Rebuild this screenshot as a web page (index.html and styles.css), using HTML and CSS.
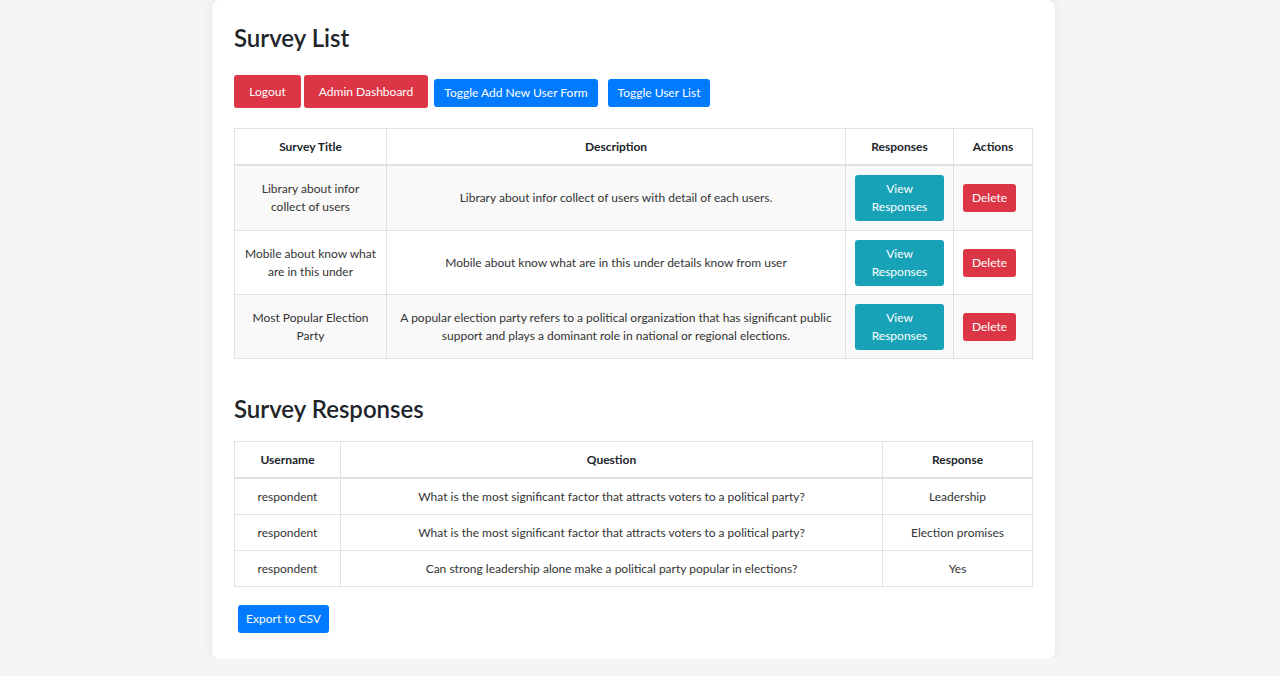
FILE: index.html
```html
<!DOCTYPE html>
<html lang="en">
<head>
<meta charset="utf-8">
<title>Survey List</title>
<link rel="stylesheet" href="styles.css">
</head>
<body>
<div class="page">
  <div class="card">
    <h2 class="title">Survey List</h2>
    <div class="toolbar">
      <button class="btn btn-danger btn-lg btn-logout">Logout</button>
      <button class="btn btn-danger btn-lg btn-admin">Admin Dashboard</button>
      <button class="btn btn-primary btn-toggle1">Toggle Add New User Form</button>
      <button class="btn btn-primary btn-toggle2">Toggle User List</button>
    </div>
    <table class="table striped survey-table">
      <thead>
        <tr>
          <th class="c-title">Survey Title</th>
          <th class="c-desc">Description</th>
          <th class="c-resp">Responses</th>
          <th class="c-act">Actions</th>
        </tr>
      </thead>
      <tbody>
        <tr>
          <td>Library about infor collect of users</td>
          <td>Library about infor collect of users with detail of each users.</td>
          <td class="btn-cell"><button class="btn btn-info btn-view">View Responses</button></td>
          <td class="btn-cell"><button class="btn btn-danger btn-del">Delete</button></td>
        </tr>
        <tr>
          <td>Mobile about know what are in this under</td>
          <td>Mobile about know what are in this under details know from user</td>
          <td class="btn-cell"><button class="btn btn-info btn-view">View Responses</button></td>
          <td class="btn-cell"><button class="btn btn-danger btn-del">Delete</button></td>
        </tr>
        <tr>
          <td>Most Popular Election Party</td>
          <td>A popular election party refers to a political organization that has significant public support and plays a dominant role in national or regional elections.</td>
          <td class="btn-cell"><button class="btn btn-info btn-view">View Responses</button></td>
          <td class="btn-cell"><button class="btn btn-danger btn-del">Delete</button></td>
        </tr>
      </tbody>
    </table>

    <h2 class="title title-2">Survey Responses</h2>
    <table class="table responses-table">
      <thead>
        <tr>
          <th class="c-user">Username</th>
          <th class="c-q">Question</th>
          <th class="c-r">Response</th>
        </tr>
      </thead>
      <tbody>
        <tr>
          <td>respondent</td>
          <td>What is the most significant factor that attracts voters to a political party?</td>
          <td>Leadership</td>
        </tr>
        <tr>
          <td>respondent</td>
          <td>What is the most significant factor that attracts voters to a political party?</td>
          <td>Election promises</td>
        </tr>
        <tr>
          <td>respondent</td>
          <td>Can strong leadership alone make a political party popular in elections?</td>
          <td>Yes</td>
        </tr>
      </tbody>
    </table>
    <div class="export-row">
      <button class="btn btn-primary btn-export">Export to CSV</button>
    </div>
  </div>
</div>
</body>
</html>
```

FILE: styles.css
```css
* { box-sizing: border-box; }

html, body {
  margin: 0;
  padding: 0;
  background: #f4f5f5;
  font-family: Lato, "Noto Sans", sans-serif;
  font-size: 12px;
  line-height: 18px;
  color: #212529;
}

.page {
  display: flex;
  justify-content: flex-start;
  padding-left: 212px;
}

.card {
  width: 843px;
  background: #fff;
  border-radius: 8px;
  box-shadow: 0 0 10px rgba(0, 0, 0, 0.08);
  padding: 20px 23px 26px 22px;
}

.title {
  margin: 0;
  font-size: 24px;
  line-height: 36px;
  font-weight: 600;
  color: #212529;
}

.title-2 {
  margin-top: 32px;
}

.toolbar {
  display: flex;
  align-items: flex-start;
  margin-top: 19px;
  margin-bottom: 20px;
}

.btn {
  font-family: inherit;
  font-size: 12px;
  line-height: 18px;
  border: 0;
  border-radius: 3px;
  color: #fff;
  padding: 5px 10px;
  white-space: nowrap;
  cursor: pointer;
}

.btn-lg {
  height: 33px;
  padding: 0;
}

.btn-danger { background: #dc3545; }
.btn-primary { background: #007bff; }
.btn-info { background: #17a2b8; }

.btn-logout { width: 67px; margin-right: 3px; }
.btn-admin { width: 124px; margin-right: 6px; }
.btn-toggle1 { width: 164px; margin-right: 10px; margin-top: 4px; padding: 5px 0; }
.btn-toggle2 { width: 102px; margin-top: 4px; padding: 5px 0; }

.table {
  width: 798px;
  border-collapse: collapse;
  table-layout: fixed;
}

.table th,
.table td {
  border: 1px solid #dee2e6;
  padding: 8.5px 9.6px;
  text-align: center;
  vertical-align: middle;
  color: #333;
}

.table th {
  font-weight: 700;
  color: #212529;
  border-bottom-width: 2px;
}

.table.striped tbody tr:nth-child(odd) td {
  background: #f9f9f9;
}

.survey-table td.btn-cell {
  padding: 9px 9px 9px 9px;
  text-align: left;
}

.survey-table tbody tr + tr td.btn-cell {
  padding-top: 8.5px;
  padding-bottom: 8.5px;
}

.c-title { width: 152px; }
.c-desc { width: 459px; }
.c-resp { width: 108px; }
.c-act { width: 79px; }

.c-user { width: 106px; }
.c-q { width: 542px; }
.c-r { width: 150px; }

.btn-view {
  width: 89px;
  padding: 5px 6px;
  display: block;
  white-space: normal;
}

.btn-del {
  width: 53px;
  padding: 5px 0;
}

.responses-table {
  margin-top: 14px;
}

.export-row {
  margin-top: 18px;
  padding-left: 4px;
}

.btn-export {
  width: 91px;
  padding: 5px 0;
}
```
